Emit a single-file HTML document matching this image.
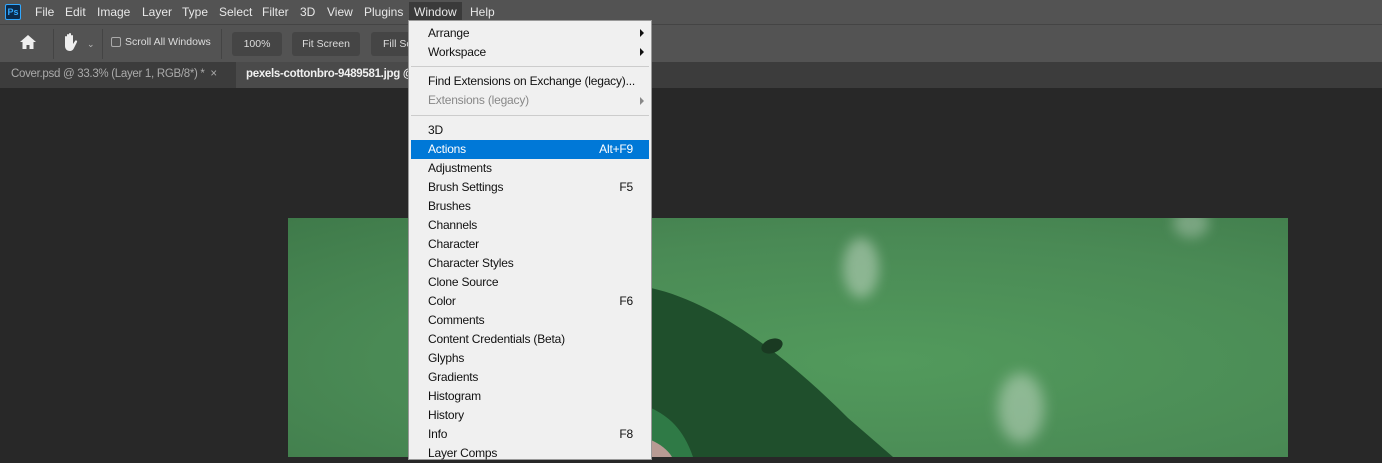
<!DOCTYPE html>
<html><head><style>
*{margin:0;padding:0;box-sizing:border-box}
body{width:1382px;height:457px;overflow:hidden;background:#282828;font-family:"Liberation Sans",sans-serif;position:relative}
.mb{position:absolute;left:0;top:0;width:1382px;height:24px;background:#535353;color:#e8e8e8;font-size:12px}
.mb span{position:absolute;top:5px;white-space:nowrap}
.tb{position:absolute;left:0;top:24px;width:1382px;height:38px;background:#535353;border-top:1px solid #444}
.tabs{position:absolute;left:0;top:62px;width:1382px;height:26px;background:#3c3c3c}
.btn{position:absolute;top:7px;height:24px;background:#454545;border-radius:3px;color:#ddd;font-size:10.5px;text-align:center;line-height:24px;white-space:nowrap;overflow:hidden}
.menu{position:absolute;left:408px;top:20px;width:244px;height:440px;background:#f0f0f0;border:1px solid #999;font-size:12px;letter-spacing:-0.2px;color:#111}
.it{position:absolute;left:19px;height:19px;line-height:19px;white-space:nowrap}
.sc{position:absolute;right:18px;height:19px;line-height:19px}
.ar{position:absolute;right:7px;width:0;height:0;border-left:4px solid #111;border-top:4px solid transparent;border-bottom:4px solid transparent}
.sep{position:absolute;left:2px;right:2px;height:1px;background:#ccc}
</style></head><body>
<div class="mb">
<div style="position:absolute;left:5px;top:4px;width:16px;height:16px;background:#0b2a4a;border:1px solid #31a8ff;border-radius:2px;color:#31a8ff;font-size:9px;font-weight:bold;text-align:center;line-height:14px">Ps</div>
<span style="left:35px">File</span><span style="left:65px">Edit</span><span style="left:97px">Image</span><span style="left:142px">Layer</span><span style="left:182px">Type</span><span style="left:219px">Select</span><span style="left:262px">Filter</span><span style="left:300px">3D</span><span style="left:327px">View</span><span style="left:364px">Plugins</span>
<div style="position:absolute;left:409px;top:2px;width:53px;height:20px;background:#3a3a3a"></div><span style="left:414px">Window</span><span style="left:470px">Help</span>
</div>
<div class="tb">
<svg style="position:absolute;left:19px;top:9px" width="18" height="16" viewBox="0 0 18 16"><path d="M9 1L1 8h2.5v7h4v-4h3v4h4V8H17z" fill="#eee"/></svg>
<div style="position:absolute;left:53px;top:4px;width:1px;height:30px;background:#444"></div>
<svg style="position:absolute;left:61px;top:7px" width="18" height="20" viewBox="0 0 18 20"><path d="M4 11V5a1 1 0 012 0v5V3a1 1 0 012 0v7V2a1 1 0 012 0v8V4a1 1 0 012 0v8l2-3a1 1 0 012 1l-3 6c-1 2-2 3-5 3H9c-3 0-5-2-5-5z" fill="#eee"/></svg>
<div style="position:absolute;left:87px;top:14px;color:#bbb;font-size:9px">&#8964;</div>
<div style="position:absolute;left:102px;top:4px;width:1px;height:30px;background:#444"></div>
<div style="position:absolute;left:111px;top:12px;width:10px;height:10px;border:1px solid #aaa;border-radius:2px"></div>
<div style="position:absolute;left:125px;top:11px;color:#ddd;font-size:10.5px">Scroll All Windows</div>
<div style="position:absolute;left:221px;top:4px;width:1px;height:30px;background:#444"></div>
<div class="btn" style="left:232px;width:50px">100%</div>
<div class="btn" style="left:292px;width:68px">Fit Screen</div>
<div class="btn" style="left:371px;width:60px;text-align:left;padding-left:12px">Fill Screen</div>
</div>
<div class="tabs">
<div style="position:absolute;left:11px;top:6px;color:#aaa;font-size:11.5px;white-space:nowrap;letter-spacing:-0.3px">Cover.psd @ 33.3% (Layer 1, RGB/8*) * &nbsp;×</div>
<div style="position:absolute;left:236px;top:0;width:200px;height:26px;background:#4a4a4a"></div>
<div style="position:absolute;left:246px;top:6px;color:#f0f0f0;font-size:11.5px;font-weight:bold;white-space:nowrap;letter-spacing:-0.3px">pexels-cottonbro-9489581.jpg @</div>
</div>
<div style="position:absolute;left:288px;top:218px;width:1000px;height:239px;background:radial-gradient(ellipse at 60% 60%,#529a5c,#4a8a55 60%,#3f7a4a);overflow:hidden">
<div style="position:absolute;left:555px;top:20px;width:36px;height:60px;border-radius:50%;background:rgba(220,230,220,.45);filter:blur(6px)"></div>
<div style="position:absolute;left:710px;top:155px;width:46px;height:70px;border-radius:50%;background:rgba(220,230,220,.45);filter:blur(7px)"></div>
<div style="position:absolute;left:885px;top:-10px;width:36px;height:30px;border-radius:50%;background:rgba(220,230,220,.35);filter:blur(6px)"></div>
<svg style="position:absolute;left:0;top:0" width="1000" height="239"><path d="M363 70C430 85 500 140 560 200L605 239H363z" fill="#1f4f2c"/><path d="M363 190C380 198 395 210 405 239H363z" fill="#2f7a46"/><path d="M363 222C372 226 380 232 384 239H363z" fill="#b89b94"/><ellipse cx="484" cy="128" rx="11" ry="7" fill="#1a3a22" transform="rotate(-20 484 128)"/></svg>
</div>
<div class="menu">
<div class="it" style="top:3px">Arrange</div><div class="ar" style="top:8px"></div>
<div class="it" style="top:22px">Workspace</div><div class="ar" style="top:27px"></div>
<div class="sep" style="top:45px"></div>
<div class="it" style="top:51px">Find Extensions on Exchange (legacy)...</div>
<div class="it" style="top:70px;color:#888">Extensions (legacy)</div><div class="ar" style="top:76px;border-left-color:#888"></div>
<div class="sep" style="top:94px"></div>
<div class="it" style="top:100px">3D</div>
<div style="position:absolute;left:2px;top:119px;width:238px;height:19px;background:#0078d7"></div>
<div class="it" style="top:119px;color:#fff">Actions</div><div class="sc" style="top:119px;color:#fff">Alt+F9</div>
<div class="it" style="top:138px">Adjustments</div>
<div class="it" style="top:157px">Brush Settings</div><div class="sc" style="top:157px">F5</div>
<div class="it" style="top:176px">Brushes</div>
<div class="it" style="top:195px">Channels</div>
<div class="it" style="top:214px">Character</div>
<div class="it" style="top:233px">Character Styles</div>
<div class="it" style="top:252px">Clone Source</div>
<div class="it" style="top:271px">Color</div><div class="sc" style="top:271px">F6</div>
<div class="it" style="top:290px">Comments</div>
<div class="it" style="top:309px">Content Credentials (Beta)</div>
<div class="it" style="top:328px">Glyphs</div>
<div class="it" style="top:347px">Gradients</div>
<div class="it" style="top:366px">Histogram</div>
<div class="it" style="top:385px">History</div>
<div class="it" style="top:404px">Info</div><div class="sc" style="top:404px">F8</div>
<div class="it" style="top:423px">Layer Comps</div>
</div>
</body></html>
